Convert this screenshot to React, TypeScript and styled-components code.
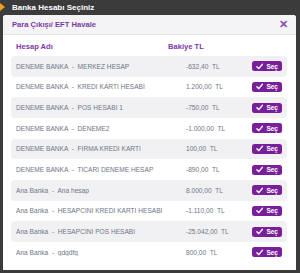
import React from "react";
import styled, { createGlobalStyle } from "styled-components";

const Global = createGlobalStyle`
  html, body { margin: 0; padding: 0; background: #3b3b3b; }
  body { font-family: "Liberation Sans", Arial, sans-serif; width: 300px; height: 273px; overflow: hidden; }
`;

const Page = styled.div`
  width: 300px;
  height: 273px;
  background: #3b3b3b;
  display: flex;
  flex-direction: column;
`;

const TopBar = styled.div`
  height: 14px;
  display: flex;
  align-items: center;
  gap: 7px;
  color: #fff;
  font-weight: bold;
  font-size: 8px;
`;

const Arrow = styled.span`
  width: 0;
  height: 0;
  border-top: 4px solid transparent;
  border-bottom: 4px solid transparent;
  border-left: 5px solid #f0a020;
`;

const Modal = styled.div`
  margin: 1px 4px 0 3px;
  background: #fff;
  border-radius: 3px 3px 0 0;
  height: 255px;
  display: flex;
  flex-direction: column;
`;

const ModalHeader = styled.div`
  height: 19px;
  background: #f4f4f6;
  border-bottom: 1px solid #e6e6ea;
  border-radius: 3px 3px 0 0;
  display: flex;
  align-items: center;
  justify-content: space-between;
  padding: 0 8px 0 9px;
  color: #7b3aa3;
  font-weight: bold;
  font-size: 7.6px;
`;

const Close = styled.span`
  font-size: 11px;
  color: #8a4db5;
  font-weight: bold;
`;

const Body = styled.div`
  padding: 3px 9px 0 8px;
  display: flex;
  flex-direction: column;
`;

const HeadRow = styled.div`
  display: grid;
  grid-template-columns: 152px 1fr;
  padding: 0 5px;
  height: 16px;
  align-items: center;
  color: #7b3aa3;
  font-weight: bold;
  font-size: 7.6px;
  margin-bottom: 2px;
`;

const Row = styled.div<{ $shaded: boolean }>`
  display: grid;
  grid-template-columns: 170px 66px 1fr;
  align-items: center;
  height: 20.67px;
  padding: 0 5px;
  border-radius: 4px;
  background: ${(p) => (p.$shaded ? "#f1f1f4" : "transparent")};
  color: #6e7685;
  font-size: 6.6px;
  white-space: pre;
`;

const Name = styled.span`
  overflow: hidden;
`;

const Amount = styled.span``;

const Btn = styled.span`
  justify-self: start;
  display: inline-flex;
  align-items: center;
  gap: 3px;
  height: 10px;
  width: 30px;
  box-sizing: border-box;
  padding: 0 4px;
  background: #7a1f9c;
  border-radius: 2.5px;
  color: #fff;
  font-weight: bold;
  font-size: 6.5px;
`;

const Title = styled.span`
  white-space: pre;
`;

const rows: [string, string][] = [
  ["DENEME BANKA  -  MERKEZ HESAP", "-632,40  TL"],
  ["DENEME BANKA  -  KREDİ KARTI HESABI", "1.200,00  TL"],
  ["DENEME BANKA  -  POS HESABI 1", "-750,00  TL"],
  ["DENEME BANKA  -  DENEME2", "-1.000,00  TL"],
  ["DENEME BANKA  -  FİRMA KREDİ KARTI", "100,00  TL"],
  ["DENEME BANKA  -  TİCARİ DENEME HESAP", "-890,00  TL"],
  ["Ana Banka  -  Ana hesap", "8.000,00  TL"],
  ["Ana Banka  -  HESAPCİNİ KREDİ KARTI HESABI", "-1.110,00  TL"],
  ["Ana Banka  -  HESAPCİNİ POS HESABI", "-25.042,00  TL"],
  ["Ana Banka  -  gdgdfg", "800,00  TL"],
];

const Check = () => (
  <svg width="8" height="7" viewBox="0 0 8 7">
    <path d="M1 3.8 L3 5.8 L7 1" fill="none" stroke="#fff" strokeWidth="1.5" strokeLinecap="round" strokeLinejoin="round" />
  </svg>
);

export default function App() {
  return (
    <Page>
      <Global />
      <TopBar>
        <Arrow />
        <Title>Banka Hesabı Seçiniz</Title>
      </TopBar>
      <Modal>
        <ModalHeader>
          <span>Para Çıkışı/ EFT Havale</span>
          <Close>✕</Close>
        </ModalHeader>
        <Body>
          <HeadRow>
            <span>Hesap Adı</span>
            <span>Bakiye TL</span>
          </HeadRow>
          {rows.map(([n, a], i) => (
            <Row key={i} $shaded={i % 2 === 0}>
              <Name>{n}</Name>
              <Amount>{a}</Amount>
              <Btn>
                <Check />
                Seç
              </Btn>
            </Row>
          ))}
        </Body>
      </Modal>
    </Page>
  );
}
